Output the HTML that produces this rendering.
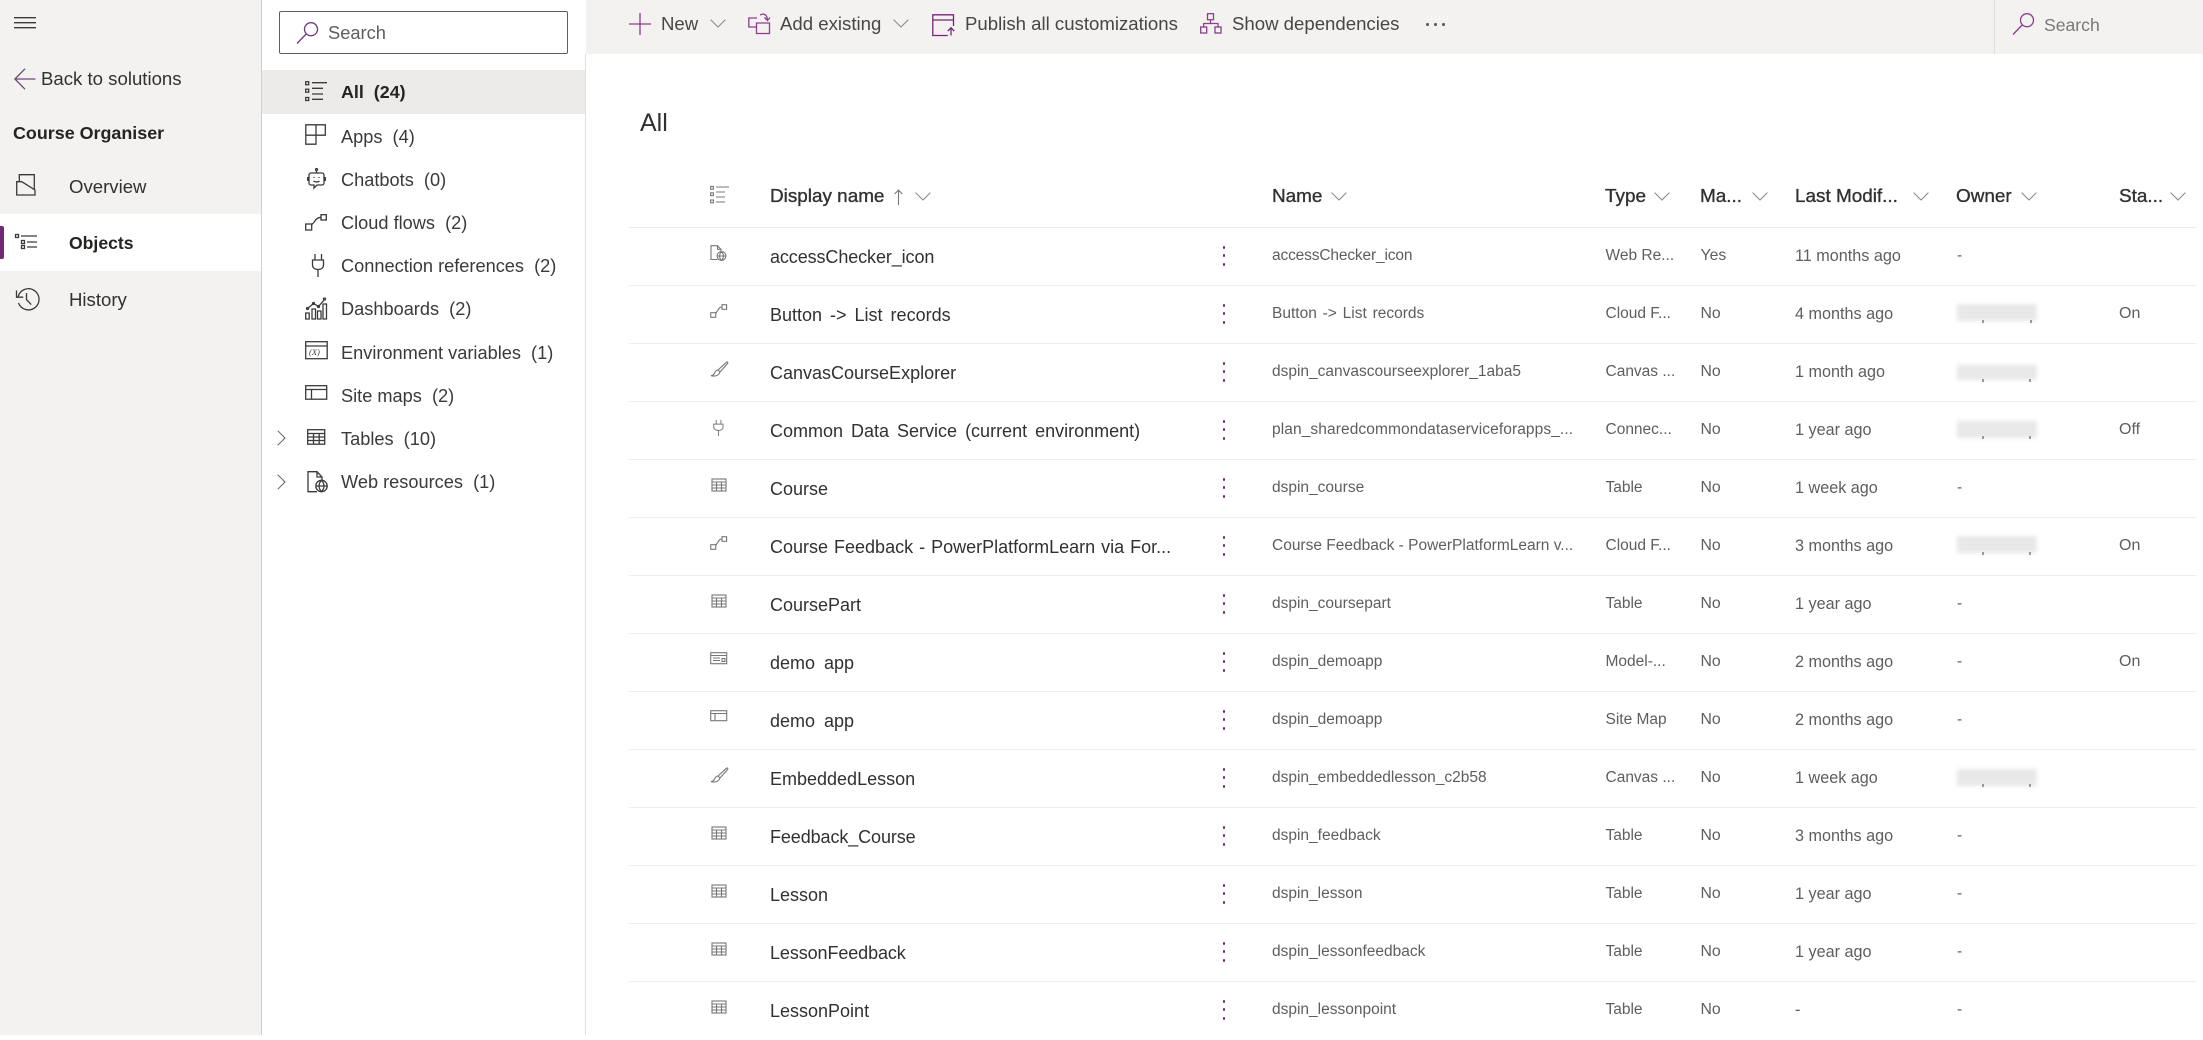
<!DOCTYPE html>
<html><head><meta charset="utf-8"><title>Course Organiser</title>
<style>
html,body{margin:0;padding:0;background:#fff}
body{width:2203px;height:1035px;overflow:hidden;position:relative;font-family:"Liberation Sans",sans-serif;color:#323130}
.a{position:absolute}
.t{position:absolute;white-space:nowrap;line-height:30px;height:30px}
svg{position:absolute;overflow:visible;fill:none;stroke-width:1.3}
.nav{font-size:18.6px;color:#323130}
.sub{font-size:18.2px;color:#3b3a39}
.tb{font-size:18.6px;color:#484644;top:9px}
.hd{font-size:18.9px;color:#323130;top:182px;-webkit-text-stroke:.35px #323130}
.r{position:absolute;left:629px;width:1568px;height:58px;border-bottom:1.5px solid #f0efee;box-sizing:border-box}
.n{left:141px;top:14px;font-size:18px;color:#323130}
.c{top:12.5px;font-size:15.5px;color:#605e5c}
.c1{left:643px}.c2{left:976.5px}.c3{left:1071.5px;font-size:15.8px}.c4{left:1166px;font-size:16.2px}.c5{left:1328px}.c6{left:1490px;font-size:16px}
.k{position:absolute;left:593.5px;width:2.5px;height:2.5px;border-radius:50%;background:#742774}
.b{position:absolute;left:1328px;width:80px;height:17px;background:#e8e8e8;filter:blur(2px)}
.tick{position:absolute;width:2px;height:3px;background:#9a9896}
.ic{stroke:#797775;left:81px;top:18px;stroke-width:1.1}
.nic{stroke:#3b3a39}
.pi{stroke:#8a3f8a}
.chev{stroke:#8a8886;stroke-width:1}
</style></head><body>
<svg width="0" height="0" style="position:absolute"><defs>
<g id="tbl"><rect x="1" y="1" width="14" height="12"/><path d="M1 4h14M1 7h14M1 10h14M5.5 4v9M10.5 4v9"/></g>
<g id="flow"><rect x=".7" y="8.7" width="5" height="4.6"/><rect x="12" y=".7" width="4.6" height="4.6"/><path d="M5.5 9.5C8 7 8.5 3 12 3"/></g>
<g id="brush"><path d="M16.5 1.2c.8-.6 1.800.3 1.200 1.200L10 11 8 9zM8 9c-2.500.2-3 2-3.700 3.500C3.800 13.700 2 14.500 1 14.700c3 .8 7.500.5 9-3.700"/></g>
<g id="web"><path d="M7.500 14.500H1V.7h6.500l3.500 3.600V6M7.500.7v3.600H11"/><circle cx="11.500" cy="11" r="4.400"/><path d="M7.100 11h8.800M11.500 6.600c-2.600 2.600-2.600 6.200 0 8.800 2.600-2.600 2.600-6.200 0-8.800"/></g>
<g id="plug"><path d="M5 1v5M10.500 1v5M2 6h11v3.500C13 12 10.500 13.500 7.700 13.500S2 12 2 9.500zM7.700 13.500V20"/></g>
<g id="mod"><rect x=".7" y=".7" width="16" height="11"/><path d="M.7 3.500h16M3 6h7M3 8.500h7"/><rect x="12" y="6.500" width="3" height="3"/></g>
<g id="site"><rect x=".7" y=".7" width="16" height="10"/><path d="M.7 3.500h16M5 3.500v7"/></g>
<g id="srch"><circle cx="15" cy="7.200" r="6.500"/><path d="M10.200 12L1 21.500"/></g>
<g id="ch"><path d="M.6.6l7.400 7.400L15.400.6"/></g>
<g id="list"><rect x=".6" y=".4" width="2.800" height="2.800"/><rect x=".6" y="6.800" width="2.800" height="2.800"/><rect x=".6" y="14" width="2.800" height="2.800"/><path d="M6 1h13M6 6h9M6 11h9M6 16h9"/></g>
</defs></svg>

<!-- Left nav -->
<div class="a" style="left:0;top:0;width:261px;height:1035px;background:#f3f2f1;border-right:1.5px solid #d2d0ce"></div>
<svg class="nic" style="left:14px;top:17px" width="22" height="12"><path d="M0 .7h22M0 5.700h22M0 10.700h22"/></svg>
<svg style="left:14px;top:68px;stroke:#6b4a73" width="22" height="22"><path d="M21.500 11H1M11 .8L.9 11l10.100 10.200"/></svg>
<span class="t nav" style="left:41px;top:64px;">Back to solutions</span>
<span class="t" style="left:13px;top:118px;font-size:17.9px;font-weight:bold;color:#252423">Course Organiser</span>
<svg class="nic" style="left:16px;top:174px" width="21" height="22"><path d="M.7 21V7.700H5.700L19 16V21ZM3.300 7.700V.7H18.300V16"/></svg>
<span class="t nav" style="left:69px;top:172px">Overview</span>
<div class="a" style="left:0;top:214px;width:261px;height:57px;background:#fff"></div>
<div class="a" style="left:0;top:226px;width:4px;height:33px;background:#742774;border-radius:0 2px 2px 0"></div>
<svg class="nic" style="left:15px;top:234px" width="23" height="16"><rect x=".5" y=".5" width="3" height="3"/><rect x="6.500" y="6.500" width="3" height="3"/><rect x="6.500" y="11.500" width="3" height="3"/><path d="M6 2h16M12 8h10M12 13h10"/></svg>
<span class="t" style="left:69px;top:228px;font-size:17.6px;font-weight:bold;color:#252423">Objects</span>
<svg class="nic" style="left:15px;top:287px" width="23" height="23"><path d="M3.200 9.500A10.600 10.600 0 1 1 3.500 16M1.500 3.500v6.700h6.700M11.500 6v6.600l4.700 5"/></svg>
<span class="t nav" style="left:69px;top:285px">History</span>

<!-- Secondary panel -->
<div class="a" style="left:278.5px;top:11px;width:287px;height:41px;border:1.3px solid #605e5c;border-radius:2px;background:#fff"></div>
<svg class="pi" style="left:296px;top:22px;stroke:#6b3c7f" width="22" height="23"><use href="#srch"/></svg>
<span class="t" style="left:328px;top:18px;font-size:18.3px;color:#605e5c">Search</span>
<div class="a" style="left:262px;top:70px;width:323px;height:44px;background:#edebe9"></div>
<div class="a" style="left:585px;top:54px;width:1px;height:981px;background:#e1dfdd"></div>

<svg class="nic" style="left:305px;top:81px" width="23" height="20"><rect x=".7" y=".7" width="3" height="3"/><rect x=".7" y="8.200" width="3" height="3"/><rect x=".7" y="16.500" width="3" height="3"/><path d="M7 1.700h15M7 7.300h11M7 13h11M7 18.300h11"/></svg>
<span class="t sub" style="left:341px;top:77px;font-weight:bold;color:#252423;font-size:17.9px">All&nbsp; (24)</span>
<svg class="nic" style="left:305px;top:124px" width="21" height="21"><path d="M.8.8h19.500v10.400H11v9H.8zM.8 11.200H11M11 .8v10.400"/></svg>
<span class="t sub" style="left:341px;top:122px">Apps&nbsp; (4)</span>
<svg class="nic" style="left:307px;top:168px" width="19" height="22"><circle cx="9.500" cy="1.500" r="1"/><path d="M9.500 2.500V5M4 5h11a2 2 0 0 1 2 2v8a2 2 0 0 1-2 2h-5l-3 3v-3H4a2 2 0 0 1-2-2V7a2 2 0 0 1 2-2zM.7 9v4M18.300 9v4M6.500 13c1.500 1.300 4.500 1.300 6 0M7 9v1M12 9v1"/></svg>
<span class="t sub" style="left:341px;top:165px">Chatbots&nbsp; (0)</span>
<svg class="nic" style="left:305px;top:214px" width="22" height="17"><rect x=".7" y="10" width="6" height="6"/><rect x="16" y=".7" width="5.300" height="5.300"/><path d="M6.500 10.500C10 9 10 3.500 16 3.300"/></svg>
<span class="t sub" style="left:341px;top:208px">Cloud flows&nbsp; (2)</span>
<svg class="nic" style="left:311px;top:254px" width="15" height="23"><path d="M4 0v6M10.500 0v6M1.500 6h11v5c0 3-2.500 4.500-5.500 4.500S1.500 14 1.500 11zM7 15.500V23"/></svg>
<span class="t sub" style="left:341px;top:251px">Connection references&nbsp; (2)</span>
<svg class="nic" style="left:305px;top:297px" width="22" height="23"><path d="M.7 16h3.500v6H.7zM7 12h3.500v10H7zM12.500 14H16v8h-3.500zM18 7h3.500v15H18zM2.500 11.500l6-5 5 3 6-7"/><circle cx="2.500" cy="11.500" r="1"/><circle cx="8.500" cy="6.500" r="1"/><circle cx="13.500" cy="9.500" r="1"/><circle cx="19.500" cy="2" r="1"/></svg>
<span class="t sub" style="left:341px;top:294px">Dashboards&nbsp; (2)</span>
<svg class="nic" style="left:305px;top:341px" width="23" height="19"><rect x=".7" y=".7" width="21.500" height="17"/><path d="M.7 5h21.500"/><text x="4" y="14" font-family="Liberation Serif" font-size="8.500" fill="#3b3a39" stroke="none" font-style="italic">(X)</text></svg>
<span class="t sub" style="left:341px;top:338px">Environment variables&nbsp; (1)</span>
<svg class="nic" style="left:305px;top:385px" width="22" height="15"><rect x=".7" y=".7" width="21" height="13.500"/><path d="M.7 4.500h21M6.500 4.500v9.700"/></svg>
<span class="t sub" style="left:341px;top:381px">Site maps&nbsp; (2)</span>
<svg class="chev" style="left:277px;top:430px;stroke:#605e5c" width="9" height="16"><path d="M.7.7L8 8 .7 15.300"/></svg>
<svg class="nic" style="left:307px;top:429px" width="19" height="16"><rect x=".7" y=".7" width="17" height="14.500"/><path d="M.7 4.500h17M.7 8h17M.7 11.500h17M6.500 4.500v10.700M12.200 4.500v10.700"/></svg>
<span class="t sub" style="left:341px;top:424px">Tables&nbsp; (10)</span>
<svg class="chev" style="left:277px;top:474px;stroke:#605e5c" width="9" height="16"><path d="M.7.700L8 8 .7 15.300"/></svg>
<svg class="nic" style="left:307px;top:471px" width="21" height="22"><path d="M10 20.700H1V.7h9l5 5.300v3M10 .7v5.300h5"/><circle cx="14.500" cy="15" r="5.700"/><path d="M8.800 15h11.400M14.500 9.300c-3.300 3.500-3.300 8 0 11.400 3.300-3.400 3.300-7.900 0-11.400"/></svg>
<span class="t sub" style="left:341px;top:467px">Web resources&nbsp; (1)</span>

<!-- Toolbar -->
<div class="a" style="left:586px;top:0;width:1617px;height:54px;background:#f3f2f1"></div>
<div class="a" style="left:1994px;top:0;width:1px;height:54px;background:#e1dfdd"></div>
<svg class="pi" style="left:629px;top:13px" width="22" height="22"><path d="M0 11h22M11 0v22"/></svg>
<span class="t tb" style="left:661px">New</span>
<svg class="chev" style="left:710px;top:19px" width="16" height="9"><use href="#ch"/></svg>
<svg class="pi" style="left:748px;top:13px" width="23" height="22"><path d="M9 5H.8v9h8M8.500 10H21.500v10.500H8.500zM12 2c4-2 7-.5 7.500 5M16.500 4.500l3 3 2.500-3"/></svg>
<span class="t tb" style="left:780px">Add existing</span>
<svg class="chev" style="left:893px;top:19px" width="16" height="9"><use href="#ch"/></svg>
<svg class="pi" style="left:932px;top:14px;stroke:#742774" width="23" height="22"><path d="M21.500 12V.8H.8V21.500h15M.8 6h20.700M19 21.500v-7.500M15.800 17l3.200-3.200 3.200 3.200"/></svg>
<span class="t tb" style="left:965px">Publish all customizations</span>
<svg class="pi" style="left:1200px;top:13px" width="22" height="21"><rect x="7.500" y=".7" width="6" height="6"/><rect x=".7" y="14" width="6" height="6"/><rect x="15" y="14" width="6" height="6"/><path d="M10.500 6.700V10.500M3.700 14v-3.500h14.300V14"/></svg>
<span class="t tb" style="left:1232px">Show dependencies</span>
<span class="a" style="left:1426px;top:23px;width:2.500px;height:2.500px;background:#605e5c;border-radius:50%;box-shadow:8px 0 #605e5c,16px 0 #605e5c"></span>
<svg class="pi" style="left:2012px;top:13px" width="22" height="23"><use href="#srch"/></svg>
<span class="t" style="left:2044px;top:10px;font-size:17.6px;color:#797775">Search</span>

<!-- Content -->
<span class="t" style="left:640px;top:108px;font-size:25px;color:#323130">All</span>

<svg style="left:710px;top:186px;stroke:#797775;stroke-width:1.1" width="20" height="18"><use href="#list"/></svg>
<span class="t hd" style="left:770px">Display name</span>
<svg style="left:894px;top:189px;stroke:#797775;stroke-width:1.100" width="9" height="16"><path d="M4.500 16V1M.7 5l3.800-4 3.800 4"/></svg>
<svg class="chev" style="left:915px;top:192px" width="16" height="9"><use href="#ch"/></svg>
<span class="t hd" style="left:1272px">Name</span>
<svg class="chev" style="left:1331px;top:192px" width="16" height="9"><use href="#ch"/></svg>
<span class="t hd" style="left:1605px">Type</span>
<svg class="chev" style="left:1654px;top:192px" width="16" height="9"><use href="#ch"/></svg>
<span class="t hd" style="left:1700px">Ma...</span>
<svg class="chev" style="left:1752px;top:192px" width="16" height="9"><use href="#ch"/></svg>
<span class="t hd" style="left:1795px">Last Modif...</span>
<svg class="chev" style="left:1913px;top:192px" width="16" height="9"><use href="#ch"/></svg>
<span class="t hd" style="left:1956px">Owner</span>
<svg class="chev" style="left:2021px;top:192px" width="16" height="9"><use href="#ch"/></svg>
<span class="t hd" style="left:2119px">Sta...</span>
<svg class="chev" style="left:2170px;top:192px" width="16" height="9"><use href="#ch"/></svg>
<div class="a" style="left:629px;top:226.5px;width:1568px;height:1.500px;background:#edebe9"></div>

<div class="r" style="top:228px"><svg class="ic" width="17" height="16" style="top:17px"><use href="#web"/></svg><span class="t n" style="letter-spacing:-.1px">accessChecker_icon</span><i class="k" style="top:18px"></i><i class="k" style="top:26px"></i><i class="k" style="top:35px"></i><span class="t c c1" style="letter-spacing:-.15px">accessChecker_icon</span><span class="t c c2">Web Re...</span><span class="t c c3">Yes</span><span class="t c c4">11 months ago</span><span class="t c c5">-</span></div>
<div class="r" style="top:286px"><svg class="ic" width="17" height="14"><use href="#flow"/></svg><span class="t n" style="word-spacing:3px">Button -&gt; List records</span><i class="k" style="top:18px"></i><i class="k" style="top:26px"></i><i class="k" style="top:35px"></i><span class="t c c1" style="word-spacing:1.5px">Button -&gt; List records</span><span class="t c c2">Cloud F...</span><span class="t c c3">No</span><span class="t c c4">4 months ago</span><div class="b" style="top:18px"></div><i class="tick" style="left:1353px;top:34px"></i><i class="tick" style="left:1401px;top:34px"></i><span class="t c c6">On</span></div>
<div class="r" style="top:344px"><svg class="ic" width="18" height="15" style="top:17px"><use href="#brush"/></svg><span class="t n">CanvasCourseExplorer</span><i class="k" style="top:18px"></i><i class="k" style="top:26px"></i><i class="k" style="top:35px"></i><span class="t c c1">dspin_canvascourseexplorer_1aba5</span><span class="t c c2">Canvas ...</span><span class="t c c3">No</span><span class="t c c4">1 month ago</span><div class="b" style="top:21px;height:15px"></div><i class="tick" style="left:1353px;top:35px"></i><i class="tick" style="left:1400px;top:35px"></i></div>
<div class="r" style="top:402px"><svg class="ic" width="15" height="20" style="left:83px;top:17px;transform:scale(.85);transform-origin:top left"><use href="#plug"/></svg><span class="t n" style="word-spacing:3px">Common Data Service (current environment)</span><i class="k" style="top:18px"></i><i class="k" style="top:26px"></i><i class="k" style="top:35px"></i><span class="t c c1" style="letter-spacing:.1px">plan_sharedcommondataserviceforapps_...</span><span class="t c c2">Connec...</span><span class="t c c3">No</span><span class="t c c4">1 year ago</span><div class="b" style="top:19px"></div><i class="tick" style="left:1353px;top:34px"></i><i class="tick" style="left:1400px;top:34px"></i><span class="t c c6">Off</span></div>
<div class="r" style="top:460px"><svg class="ic" width="16" height="14" style="left:82px"><use href="#tbl"/></svg><span class="t n">Course</span><i class="k" style="top:18px"></i><i class="k" style="top:26px"></i><i class="k" style="top:35px"></i><span class="t c c1">dspin_course</span><span class="t c c2">Table</span><span class="t c c3">No</span><span class="t c c4">1 week ago</span><span class="t c c5">-</span></div>
<div class="r" style="top:518px"><svg class="ic" width="17" height="14"><use href="#flow"/></svg><span class="t n" style="word-spacing:1px">Course Feedback - PowerPlatformLearn via For...</span><i class="k" style="top:18px"></i><i class="k" style="top:26px"></i><i class="k" style="top:35px"></i><span class="t c c1">Course Feedback - PowerPlatformLearn v...</span><span class="t c c2">Cloud F...</span><span class="t c c3">No</span><span class="t c c4">3 months ago</span><div class="b" style="top:18px"></div><i class="tick" style="left:1353px;top:34px"></i><i class="tick" style="left:1400px;top:34px"></i><span class="t c c6">On</span></div>
<div class="r" style="top:576px"><svg class="ic" width="16" height="14" style="left:82px"><use href="#tbl"/></svg><span class="t n">CoursePart</span><i class="k" style="top:18px"></i><i class="k" style="top:26px"></i><i class="k" style="top:35px"></i><span class="t c c1">dspin_coursepart</span><span class="t c c2">Table</span><span class="t c c3">No</span><span class="t c c4">1 year ago</span><span class="t c c5">-</span></div>
<div class="r" style="top:634px"><svg class="ic" width="18" height="13"><use href="#mod"/></svg><span class="t n" style="word-spacing:4px">demo app</span><i class="k" style="top:18px"></i><i class="k" style="top:26px"></i><i class="k" style="top:35px"></i><span class="t c c1">dspin_demoapp</span><span class="t c c2">Model-...</span><span class="t c c3">No</span><span class="t c c4">2 months ago</span><span class="t c c5">-</span><span class="t c c6">On</span></div>
<div class="r" style="top:692px"><svg class="ic" width="18" height="12"><use href="#site"/></svg><span class="t n" style="word-spacing:4px">demo app</span><i class="k" style="top:18px"></i><i class="k" style="top:26px"></i><i class="k" style="top:35px"></i><span class="t c c1">dspin_demoapp</span><span class="t c c2">Site Map</span><span class="t c c3">No</span><span class="t c c4">2 months ago</span><span class="t c c5">-</span></div>
<div class="r" style="top:750px"><svg class="ic" width="18" height="15" style="top:17px"><use href="#brush"/></svg><span class="t n">EmbeddedLesson</span><i class="k" style="top:18px"></i><i class="k" style="top:26px"></i><i class="k" style="top:35px"></i><span class="t c c1">dspin_embeddedlesson_c2b58</span><span class="t c c2">Canvas ...</span><span class="t c c3">No</span><span class="t c c4">1 week ago</span><div class="b" style="top:19px"></div><i class="tick" style="left:1353px;top:34px"></i><i class="tick" style="left:1400px;top:34px"></i></div>
<div class="r" style="top:808px"><svg class="ic" width="16" height="14" style="left:82px"><use href="#tbl"/></svg><span class="t n" style="letter-spacing:-.1px">Feedback_Course</span><i class="k" style="top:18px"></i><i class="k" style="top:26px"></i><i class="k" style="top:35px"></i><span class="t c c1">dspin_feedback</span><span class="t c c2">Table</span><span class="t c c3">No</span><span class="t c c4">3 months ago</span><span class="t c c5">-</span></div>
<div class="r" style="top:866px"><svg class="ic" width="16" height="14" style="left:82px"><use href="#tbl"/></svg><span class="t n">Lesson</span><i class="k" style="top:18px"></i><i class="k" style="top:26px"></i><i class="k" style="top:35px"></i><span class="t c c1">dspin_lesson</span><span class="t c c2">Table</span><span class="t c c3">No</span><span class="t c c4">1 year ago</span><span class="t c c5">-</span></div>
<div class="r" style="top:924px"><svg class="ic" width="16" height="14" style="left:82px"><use href="#tbl"/></svg><span class="t n" style="letter-spacing:-.1px">LessonFeedback</span><i class="k" style="top:18px"></i><i class="k" style="top:26px"></i><i class="k" style="top:35px"></i><span class="t c c1">dspin_lessonfeedback</span><span class="t c c2">Table</span><span class="t c c3">No</span><span class="t c c4">1 year ago</span><span class="t c c5">-</span></div>
<div class="r" style="top:982px;border-bottom:none"><svg class="ic" width="16" height="14" style="left:82px"><use href="#tbl"/></svg><span class="t n">LessonPoint</span><i class="k" style="top:18px"></i><i class="k" style="top:26px"></i><i class="k" style="top:35px"></i><span class="t c c1">dspin_lessonpoint</span><span class="t c c2">Table</span><span class="t c c3">No</span><span class="t c c4">-</span><span class="t c c5">-</span></div>
</body></html>
